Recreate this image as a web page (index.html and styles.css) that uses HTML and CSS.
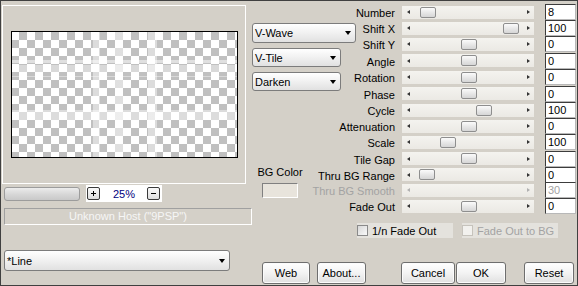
FILE: index.html
```html
<!DOCTYPE html>
<html>
<head>
<meta charset="utf-8">
<title>Filter</title>
<link rel="stylesheet" href="styles.css">
</head>
<body>
<div class="window">
  <div class="left">
    <div class="group">
      <div class="preview"></div>
    </div>
    <div class="zoomrow">
      <div class="progress"></div>
      <div class="zoomctl">
        <span class="tiny"><svg width="7" height="7" viewBox="0 0 7 7"><path d="M3.5 1v5M1 3.5h5" stroke="#000" stroke-width="1"/></svg></span>
        <span class="pct">25%</span>
        <span class="tiny minus"><svg width="7" height="7" viewBox="0 0 7 7"><path d="M1 3.5h5" stroke="#000" stroke-width="1"/></svg></span>
      </div>
    </div>
    <div class="host">Unknown Host ("9PSP")</div>
    <div class="select line"><span>*Line</span><i class="arrow"></i></div>
  </div>

  <div class="right">
    <div class="upper">
      <div class="mid">
        <div class="select wave"><span>V-Wave</span><i class="arrow"></i></div>
        <div class="select tile"><span>V-Tile</span><i class="arrow"></i></div>
        <div class="select tile"><span>Darken</span><i class="arrow"></i></div>
        <div class="bg">
          <div class="bg-label">BG Color</div>
          <div class="swatch"></div>
        </div>
      </div>

      <div class="params">
        <div class="lbl">Number</div>
        <div class="slider"><i class="la"></i><b class="thumb" style="left:18px"></b><i class="ra"></i></div>
        <div class="val">8</div>

        <div class="lbl">Shift X</div>
        <div class="slider"><i class="la"></i><b class="thumb" style="left:101px"></b><i class="ra"></i></div>
        <div class="val">100</div>

        <div class="lbl">Shift Y</div>
        <div class="slider"><i class="la"></i><b class="thumb" style="left:59px"></b><i class="ra"></i></div>
        <div class="val">0</div>

        <div class="lbl">Angle</div>
        <div class="slider"><i class="la"></i><b class="thumb" style="left:59px"></b><i class="ra"></i></div>
        <div class="val">0</div>

        <div class="lbl">Rotation</div>
        <div class="slider"><i class="la"></i><b class="thumb" style="left:59px"></b><i class="ra"></i></div>
        <div class="val">0</div>

        <div class="lbl">Phase</div>
        <div class="slider"><i class="la"></i><b class="thumb" style="left:59px"></b><i class="ra"></i></div>
        <div class="val">0</div>

        <div class="lbl">Cycle</div>
        <div class="slider"><i class="la"></i><b class="thumb" style="left:74px"></b><i class="ra"></i></div>
        <div class="val">100</div>

        <div class="lbl">Attenuation</div>
        <div class="slider"><i class="la"></i><b class="thumb" style="left:59px"></b><i class="ra"></i></div>
        <div class="val">0</div>

        <div class="lbl">Scale</div>
        <div class="slider"><i class="la"></i><b class="thumb" style="left:38px"></b><i class="ra"></i></div>
        <div class="val">100</div>

        <div class="lbl">Tile Gap</div>
        <div class="slider"><i class="la"></i><b class="thumb" style="left:59px"></b><i class="ra"></i></div>
        <div class="val">0</div>

        <div class="lbl">Thru BG Range</div>
        <div class="slider"><i class="la"></i><b class="thumb" style="left:17px"></b><i class="ra"></i></div>
        <div class="val">0</div>

        <div class="lbl disabled">Thru BG Smooth</div>
        <div class="slider off"><i class="la"></i><i class="ra"></i></div>
        <div class="val disabled">30</div>

        <div class="lbl">Fade Out</div>
        <div class="slider"><i class="la"></i><b class="thumb" style="left:59px"></b><i class="ra"></i></div>
        <div class="val">0</div>
      </div>
    </div>

    <div class="checks">
      <label class="check"><span class="box"></span><span>1/n Fade Out</span></label>
      <label class="check off"><span class="box"></span><span>Fade Out to BG</span></label>
    </div>

    <div class="buttons">
      <div class="btn web">Web</div>
      <div class="btn about">About...</div>
      <div class="btn cancel">Cancel</div>
      <div class="btn ok">OK</div>
      <div class="btn reset">Reset</div>
    </div>
  </div>
</div>
</body>
</html>
```

FILE: styles.css
```css
* { box-sizing: border-box; margin: 0; padding: 0; }

html, body { width: 578px; height: 286px; overflow: hidden; }

body {
  background: #d4d0c8;
  border: 1px solid #404040;
  font: 11px "Liberation Sans", Arial, sans-serif;
  color: #000;
}

.window { display: flex; height: 100%; }

/* ---------- left column ---------- */
.left {
  margin-left: 1px;
  width: 250px;
  display: flex;
  flex-direction: column;
  align-items: flex-start;
}

.group {
  margin-top: 4px;
  width: 244px;
  height: 179px;
  border: 1px solid #fff;
}

.preview {
  position: relative;
  margin: 25px 0 0 8px;
  width: 227px;
  height: 127px;
  border: 1px solid #000;
  background-color: #fff;
  background-image: conic-gradient(#c0c0c0 25%, #fff 0 50%, #c0c0c0 0 75%, #fff 0);
  background-size: 16px 16px;
  background-position: -1px 0;
}

.preview::after {
  content: "";
  position: absolute;
  inset: 0;
  background:
    linear-gradient(90deg, transparent 81px, rgba(255,255,255,.45) 81px, rgba(255,255,255,.45) 88px, transparent 88px,
                    transparent 103px, rgba(255,255,255,.5) 103px, rgba(255,255,255,.5) 111px, transparent 111px,
                    transparent 136px, rgba(255,255,255,.45) 136px, rgba(255,255,255,.45) 145px, transparent 145px),
    linear-gradient(180deg, transparent 28px, rgba(255,255,255,.5) 28px, rgba(255,255,255,.5) 31px, transparent 31px,
                    transparent 33px, rgba(255,255,255,.4) 33px, rgba(255,255,255,.4) 40px, transparent 40px,
                    transparent 44px, rgba(255,255,255,.4) 44px, rgba(255,255,255,.4) 45px, transparent 45px,
                    transparent 78px, rgba(255,255,255,.45) 78px, rgba(255,255,255,.45) 88px, transparent 88px);
}

.zoomrow {
  margin-top: 1px;
  height: 17px;
  display: flex;
  align-items: center;
}

.progress {
  margin-left: 2px;
  width: 76px;
  height: 14px;
  border: 1px solid #9c9c9c;
  border-radius: 3px;
  background: linear-gradient(#ececec, #d8d8d8 50%, #c9c9c9);
}

.zoomctl {
  margin-left: 6px;
  width: 76px;
  height: 17px;
  background: #fff;
  display: flex;
  align-items: center;
  padding-left: 1px;
}

.tiny {
  width: 13px;
  height: 13px;
  border: 1px solid #3a3a3a;
  border-radius: 2px;
  background: linear-gradient(#fafafa, #dedede);
  display: flex;
  align-items: center;
  justify-content: center;
}

.pct { margin-left: 13px; color: #000080; width: 34px; }

.host {
  margin: 6px 0 0 2px;
  width: 248px;
  height: 17px;
  border-style: solid;
  border-width: 1px;
  border-color: #a0a0a0 #fff #fff #a0a0a0;
  color: #f6f6f6;
  text-align: center;
  line-height: 15px;
}

/* ---------- dropdowns ---------- */
.select {
  display: flex;
  align-items: center;
  justify-content: space-between;
  height: 20px;
  padding: 0 4px 0 2px;
  border: 1px solid #7c7c7c;
  border-radius: 3px;
  background: linear-gradient(#ffffff, #f2f2f2 45%, #e1e1e1);
}

.arrow {
  width: 0;
  height: 0;
  border-top: 4px solid #000;
  border-left: 3.5px solid transparent;
  border-right: 3.5px solid transparent;
}

.line { margin: 25px 0 0 2px; width: 226px; height: 21px; }

/* ---------- right area ---------- */
.right {
  flex: 1;
  min-width: 0;
  display: flex;
  flex-direction: column;
}

.upper { display: grid; }
.mid, .params { grid-area: 1 / 1; }

.mid {
  justify-self: start;
  padding-top: 22px;
}

.wave { width: 104px; }
.tile { width: 89px; height: 19px; margin-top: 5px; }

.bg {
  margin: 75px 0 0 2px;
  width: 52px;
  display: flex;
  flex-direction: column;
  align-items: center;
}

.bg-label { line-height: 13px; }

.swatch {
  margin-top: 4px;
  width: 36px;
  height: 15px;
  background: #e8e4dc;
  border: 1px solid;
  border-color: #808080 #fff #fff #808080;
}

/* ---------- parameter grid ---------- */
.params {
  justify-self: end;
  margin-right: 1px;
  padding-top: 3px;
  display: grid;
  grid-template-columns: 100px 143px 31px;
  grid-template-rows: 16px 16px 16px 17px 16px 17px 16px 16px 16px 17px 15px 16px 16px;
  align-items: center;
}

.lbl {
  text-align: right;
  margin-right: 7px;
  padding-top: 2px;
  line-height: 14px;
  white-space: nowrap;
}

.disabled { color: #a3a3a3; }

.slider {
  position: relative;
  margin-right: 11px;
  height: 13px;
  background: linear-gradient(#f4f3ef, #ebe9e4);
  display: flex;
  align-items: center;
  justify-content: space-between;
  padding: 0 4px 0 5px;
}

.la, .ra {
  width: 0;
  height: 0;
  border-top: 2.5px solid transparent;
  border-bottom: 2.5px solid transparent;
}
.la { border-right: 3px solid #333; }
.ra { border-left: 3px solid #333; }
.off .la { border-right-color: #b0b0b0; }
.off .ra { border-left-color: #b0b0b0; }

.thumb {
  position: absolute;
  top: 1px;
  width: 16px;
  height: 11px;
  border: 1px solid #8e8e8e;
  border-radius: 2px;
  background: linear-gradient(#fbfbfb, #e4e4e4 60%, #d6d6d6);
}

.val {
  height: 16px;
  background: #fff;
  border: 1px solid;
  border-color: #3c3c3c #b8b8b8 #b8b8b8 #3c3c3c;
  padding-left: 2px;
  line-height: 14px;
}

/* ---------- checkboxes ---------- */
.checks {
  margin: 9px 0 0 105px;
  display: flex;
  gap: 9px;
}

.check {
  width: 96px;
  height: 15px;
  background: #e4e2dd;
  display: flex;
  align-items: center;
}

.box {
  width: 11px;
  height: 11px;
  margin-right: 4px;
  border: 1px solid #8a8a8a;
  background: linear-gradient(135deg, #d8d8d8, #f9f9f9);
}

.check.off { color: #a3a3a3; }
.check.off .box { border-color: #c6c3bc; background: #f2f1ee; }

/* ---------- buttons ---------- */
.buttons {
  margin: 24px 0 0 10px;
  display: flex;
}

.btn {
  height: 22px;
  border: 1px solid #6e6e6e;
  border-radius: 3px;
  background: linear-gradient(#ffffff, #f3f3f3 50%, #e0e0e0);
  box-shadow: inset 0 0 0 1px #fbfbfb;
  text-align: center;
  line-height: 20px;
}

.web { width: 48px; }
.about { width: 49px; margin-left: 7px; }
.cancel { width: 54px; margin-left: 35px; }
.ok { width: 50px; margin-left: 1px; }
.reset { width: 50px; margin-left: 18px; }
```
